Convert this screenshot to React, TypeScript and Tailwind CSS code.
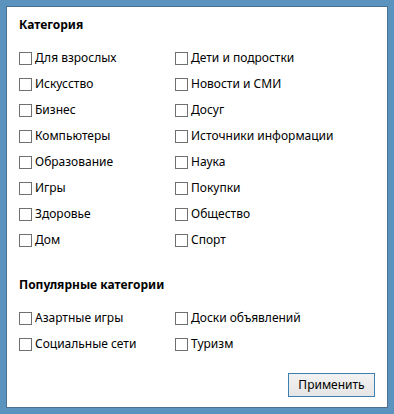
const main = [
  ['Для взрослых', 'Дети и подростки'],
  ['Искусство', 'Новости и СМИ'],
  ['Бизнес', 'Досуг'],
  ['Компьютеры', 'Источники информации'],
  ['Образование', 'Наука'],
  ['Игры', 'Покупки'],
  ['Здоровье', 'Общество'],
  ['Дом', 'Спорт'],
]

const popular = [
  ['Азартные игры', 'Доски объявлений'],
  ['Социальные сети', 'Туризм'],
]

function Check({ label }: { label: string }) {
  return (
    <label className="flex items-center h-[26px]">
      <span className="w-[13px] h-[13px] border border-[#707070] bg-white mr-[3px] shrink-0" />
      <span className="text-[12px] text-black leading-none">{label}</span>
    </label>
  )
}

function Group({ title, rows }: { title: string; rows: string[][] }) {
  return (
    <div>
      <h3 className="text-[12px] font-bold text-black h-[20px] flex items-center">{title}</h3>
      <div className="mt-[10px] grid grid-cols-[156px_1fr]">
        {rows.map((r, i) => (
          <div key={i} className="contents">
            <Check label={r[0]} />
            <Check label={r[1]} />
          </div>
        ))}
      </div>
    </div>
  )
}

export default function App() {
  return (
    <div
      className="w-[394px] h-[414px] bg-[#5b93bf] p-[6px]"
      style={{ fontFamily: '"Noto Sans", "DejaVu Sans", sans-serif' }}
    >
      <div className="h-full bg-white border border-[#4a6f8f] pl-[12px] pr-[12px] pt-[8px] flex flex-col">
        <Group title="Категория" rows={main} />
        <div className="mt-[22px]">
          <Group title="Популярные категории" rows={popular} />
        </div>
        <div className="flex justify-end mt-auto mb-[10px]">
          <button className="w-[87px] h-[24px] border border-[#3c7fb1] bg-gradient-to-b from-[#f2f2f2] to-[#e5e5e5] text-[12px] text-black">
            Применить
          </button>
        </div>
      </div>
    </div>
  )
}
